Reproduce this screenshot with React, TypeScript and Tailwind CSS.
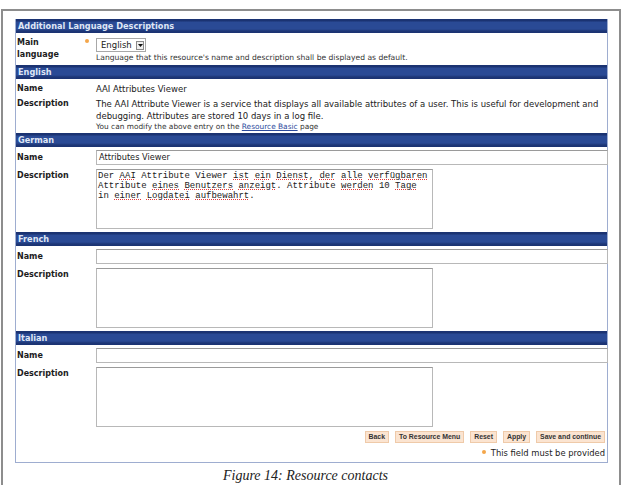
const ui = "font-['DejaVu_Sans',Verdana,sans-serif]";

function Bar({ title }: { title: string }) {
  return (
    <div className="h-[14px] bg-[linear-gradient(#1b3372_0px,#1b3372_2px,#2a4a95_3px,#2a4a95_10px,#1d3676_12px,#1b3372_14px)] px-[2px] text-[8.2px] font-bold leading-[14px] text-[#dfe6f6]">
      {title}
    </div>
  );
}

function Dot() {
  return <span className="block h-[4px] w-[4px] rounded-full bg-[#f4a64a]" />;
}

function Label({ children, className = "" }: { children: React.ReactNode; className?: string }) {
  return (
    <div className={`w-[80px] shrink-0 pl-[1px] text-[8px] font-bold text-[#1c1c1c] ${className}`}>
      {children}
    </div>
  );
}

function TextInput({ value = "" }: { value?: string }) {
  return (
    <div className="h-[15px] w-[512px] shrink-0 border border-[#b8b8b8] border-t-[#9a9a9a] bg-white px-[2px] text-[8.2px] leading-[13px] text-[#222]">
      {value}
    </div>
  );
}

function Spell({ children }: { children: React.ReactNode }) {
  return (
    <span className="underline decoration-[#e23b3b] decoration-dotted decoration-[1px] underline-offset-[1px]">
      {children}
    </span>
  );
}

function TextArea({ children }: { children?: React.ReactNode }) {
  return (
    <div className="h-[60px] w-[337px] shrink-0 border border-[#b8b8b8] border-t-[#9a9a9a] bg-white px-[1px] pt-[1px] font-['Liberation_Mono',monospace] text-[9px] leading-[10px] whitespace-pre text-[#222]">
      {children}
    </div>
  );
}

function LangBlock({ title, name, desc }: { title: string; name?: string; desc?: React.ReactNode }) {
  return (
    <>
      <Bar title={title} />
      <div className="flex pt-[3px]">
        <Label className="leading-[15px]">Name</Label>
        <TextInput value={name} />
      </div>
      <div className="flex pt-[4px] pb-[3px]">
        <Label className="mt-[1px] leading-[12px]">Description</Label>
        <TextArea>{desc}</TextArea>
      </div>
    </>
  );
}

function Btn({ children }: { children: React.ReactNode }) {
  return (
    <div className="h-[12px] border border-[#efcaa9] bg-[#fbe4d1] px-[3px] font-['Liberation_Sans',Arial,sans-serif] text-[6.9px] font-bold leading-[10px] text-[#333]">
      {children}
    </div>
  );
}

export default function App() {
  return (
    <div className={`h-[485px] w-[624px] overflow-hidden bg-white ${ui}`}>
      <div className="ml-[1px] mt-[9px] h-[500px] w-[620px] border-x-2 border-t-2 border-[#8d8d8d] pl-[12px] pt-[8px]">
        <div className="w-[593px] border-x border-b border-[#9eadd0] bg-white">
          <Bar title="Additional Language Descriptions" />
          <div className="flex h-[32px]">
            <div className="flex w-[80px] shrink-0">
              <div className="w-[68px] pl-[1px] pt-[4px] text-[8px] font-bold leading-[12px] text-[#1c1c1c]">
                Main
                <br />
                language
              </div>
              <div className="pt-[6px] pl-[1px]">
                <Dot />
              </div>
            </div>
            <div className="pt-[5px]">
              <div className="flex h-[14px] w-[50px] items-center justify-between border border-[#a8a8a8] bg-white pl-[4px] pr-[1px] text-[8.5px] text-[#222]">
                <span>English</span>
                <span className="flex h-[9px] w-[8px] items-center justify-center border border-[#8a8a8a] bg-[#eeeeee]">
                  <svg width="5" height="3" viewBox="0 0 5 3">
                    <path d="M0 0h5L2.5 3z" fill="#111" />
                  </svg>
                </span>
              </div>
              <div className="mt-[1px] text-[7.6px] leading-[10px] text-[#333]">
                Language that this resource's name and description shall be displayed as default.
              </div>
            </div>
          </div>

          <Bar title="English" />
          <div className="flex pt-[4px]">
            <Label className="leading-[12px]">Name</Label>
            <div className="text-[8.5px] leading-[12px] text-[#222]">AAI Attributes Viewer</div>
          </div>
          <div className="flex pt-[3px] pb-[1px]">
            <Label className="leading-[12px]">Description</Label>
            <div>
              <div className="whitespace-nowrap text-[8.5px] leading-[12px] text-[#222]">
                The AAI Attribute Viewer is a service that displays all available attributes of a user. This is useful for development and
                <br />
                debugging. Attributes are stored 10 days in a log file.
              </div>
              <div className="text-[7.4px] leading-[10px] text-[#333]">
                You can modify the above entry on the{" "}
                <span className="text-[#2c4a9c] underline">Resource Basic</span> page
              </div>
            </div>
          </div>

          <LangBlock
            title="German"
            name="Attributes Viewer"
            desc={
              <>
                Der <Spell>AAI</Spell> Attribute Viewer <Spell>ist</Spell> <Spell>ein</Spell> <Spell>Dienst</Spell>, <Spell>der</Spell> <Spell>alle</Spell> <Spell>verfügbaren</Spell>
                {"\n"}Attribute <Spell>eines</Spell> <Spell>Benutzers</Spell> <Spell>anzeigt</Spell>. Attribute <Spell>werden</Spell> 10 <Spell>Tage</Spell>
                {"\n"}in <Spell>einer</Spell> <Spell>Logdatei</Spell> <Spell>aufbewahrt</Spell>.
              </>
            }
          />
          <LangBlock title="French" />
          <LangBlock title="Italian" />

          <div className="flex justify-end gap-[6px] pr-[2px] pt-[1px]">
            <Btn>Back</Btn>
            <Btn>To Resource Menu</Btn>
            <Btn>Reset</Btn>
            <Btn>Apply</Btn>
            <Btn>Save and continue</Btn>
          </div>
          <div className="flex items-center justify-end gap-[5px] pr-[2px] pt-[5px] pb-[3px] text-[8.4px] leading-[11px] text-[#222]">
            <span className="-mt-[4px]">
              <Dot />
            </span>
            <span>This field must be provided</span>
          </div>
        </div>
        <div className="flex w-[593px] justify-center pr-[12px] pt-[4px] font-['Liberation_Serif',serif] text-[14px] italic leading-[18px] text-[#222]">
          Figure 14: Resource contacts
        </div>
      </div>
    </div>
  );
}
